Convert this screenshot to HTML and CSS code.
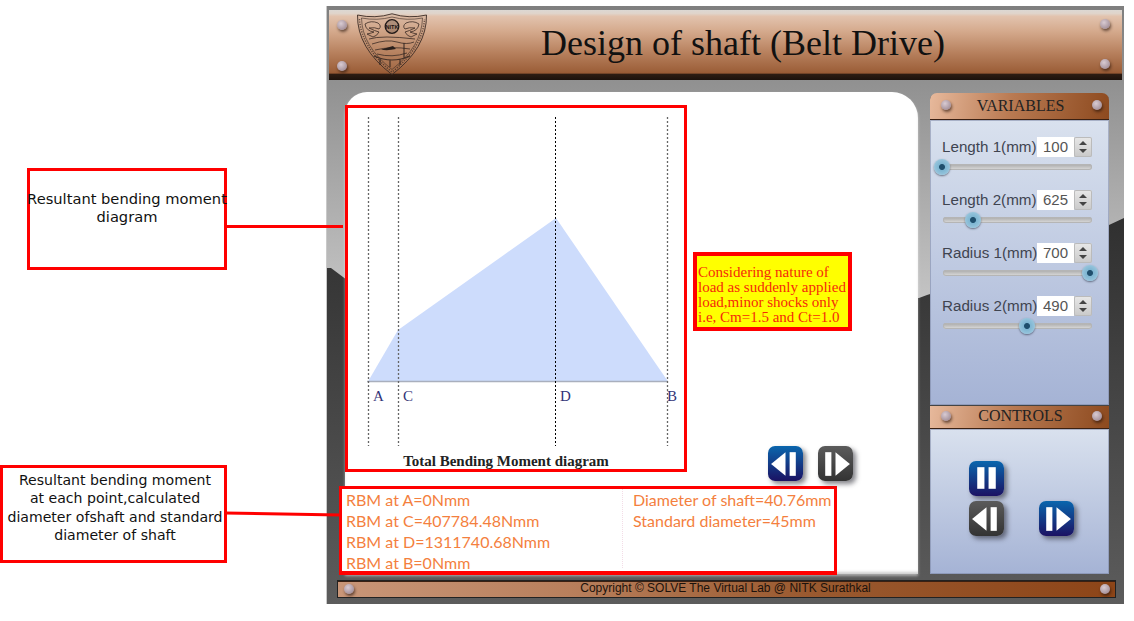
FILE: index.html
```html
<!DOCTYPE html>
<html lang="en">
<head>
<meta charset="utf-8">
<title>Design of shaft (Belt Drive)</title>
<link rel="stylesheet" href="styles.css">
</head>
<body>
<div class="page">
  <aside class="notes">
    <div class="note note-one">Resultant bending moment<br>diagram</div>
    <div class="note note-two">Resultant bending moment<br>at each point,calculated<br>diameter ofshaft and standard<br>diameter of shaft</div>
  </aside>

  <main class="app">
    <svg class="glass" viewBox="0 0 797 598" preserveAspectRatio="none" aria-hidden="true">
      <defs>
        <linearGradient id="light" x1="0" y1="0" x2="0" y2="1"><stop offset="0" stop-color="#7f7f7f"/><stop offset="1" stop-color="#c4c4c4"/></linearGradient>
        <linearGradient id="dark" x1="0" y1="0" x2="0" y2="1"><stop offset="0" stop-color="#181818"/><stop offset="1" stop-color="#5c5c5c"/></linearGradient>
      </defs>
      <rect width="797" height="598" fill="url(#dark)"/>
      <path d="M0 0H797V212L782 219Q690 262 600 289L592 292Q300 300 20 274L4 262L0 262Z" fill="url(#light)"/>
    </svg>

    <header class="masthead">
      <span class="rivet rivet-tl"></span><span class="rivet rivet-bl"></span>
      <span class="rivet rivet-tr"></span><span class="rivet rivet-br"></span>
      <svg class="crest" viewBox="0 0 70 62" aria-hidden="true">
        <path d="M.5 2Q18 6 35 .8Q52 6 69.500 2Q70 35 35 61.500Q0 35 .5 2Z" fill="#b98a6c" fill-opacity=".2" stroke="#3b2b25" stroke-width=".9"/>
        <path d="M4.500 5Q20 8 35 4Q50 8 65.500 5Q65 33 35 56.500Q5 33 4.500 5Z" fill="none" stroke="#3b2b25" stroke-width=".6"/>
        <path d="M2.500 6Q4 34 35 59Q66 34 67.500 6" fill="none" stroke="#3b2b25" stroke-width="1.500" stroke-dasharray="1.200 1.300" stroke-opacity=".7"/>
        <circle cx="35" cy="13.500" r="6.800" fill="#3a2c28" fill-opacity=".25" stroke="#221a18" stroke-width="1.300"/>
        <text class="crest-text" x="35" y="15.500" text-anchor="middle">NITK</text>
        <path d="M8 11Q14 7 21 10Q25 13 22 16Q18 14 12 15Q18 18 22 19Q20 23 16 24L10 21Q15 20 17 19Q9 18 8 11ZM62 11Q56 7 49 10Q45 13 48 16Q52 14 58 15Q52 18 48 19Q50 23 54 24L60 21Q55 20 53 19Q61 18 62 11Z" fill="none" stroke="#3b2b25" stroke-width=".8"/>
        <path d="M12 26Q25 22 58 26M15 31Q30 26 40 29Q50 32 57 29M18 37Q35 33 53 36M20 41Q35 45 50 40" fill="none" stroke="#3b2b25" stroke-width=".8"/>
        <path d="M47 30V45M17 43Q35 51 53 43M23 46V52M33 47V54M43 46V52" fill="none" stroke="#2a1f1b" stroke-width="1.200" stroke-opacity=".8"/>
        <path d="M24 36.500L36 33L39 36Q30 38 24 36.500Z" fill="#2a1f1b"/>
      </svg>
      <h1 class="title">Design of shaft (Belt Drive)</h1>
    </header>

    <div class="workspace">
      <section class="canvas">
        <div class="canvas-top">
          <figure class="diagram">
            <svg class="diagram-svg" viewBox="0 0 336 361" aria-label="Total Bending Moment diagram">
              <polygon points="20,273.500 50,222 208,110 320,273.500" fill="#cddcfc"/>
              <line x1="19" y1="273.500" x2="320" y2="273.500" stroke="#a9afbd" stroke-width="1.500"/>
              <g fill="none" stroke-dasharray="2 2">
                <line x1="20.500" y1="9" x2="20.500" y2="338" stroke="#666" stroke-width="1.300"/>
                <line x1="50.500" y1="9" x2="50.500" y2="338" stroke="#666" stroke-width="1.300"/>
                <line x1="207.500" y1="9" x2="207.500" y2="338" stroke="#000"/>
                <line x1="319.500" y1="9" x2="319.500" y2="338" stroke="#666" stroke-width="1.300"/>
              </g>
              <g class="axis-label">
                <text x="25" y="293">A</text>
                <text x="55" y="293">C</text>
                <text x="212" y="293">D</text>
                <text x="319" y="293">B</text>
              </g>
              <text class="diagram-title" x="158" y="358" text-anchor="middle">Total Bending Moment diagram</text>
            </svg>
          </figure>
          <div class="side">
            <p class="callout">Considering nature of load as suddenly applied load,minor shocks only i.e, Cm=1.5 and Ct=1.0</p>
            <div class="steps">
              <button class="btn btn-blue" aria-label="Previous"><svg viewBox="0 0 34 34"><path d="M3 17.500L17 6V29Z"/><rect x="21" y="6" width="6" height="23"/></svg></button>
              <button class="btn btn-dark" aria-label="Next"><svg viewBox="0 0 34 34"><rect x="7" y="6" width="6" height="23"/><path d="M17 6L31 17.500L17 29Z"/></svg></button>
            </div>
          </div>
        </div>
        <div class="results">
          <ul class="result-col">
            <li>RBM at A=0Nmm</li>
            <li>RBM at C=407784.48Nmm</li>
            <li>RBM at D=1311740.68Nmm</li>
            <li>RBM at B=0Nmm</li>
          </ul>
          <ul class="result-col result-col-right">
            <li>Diameter of shaft=40.76mm</li>
            <li>Standard diameter=45mm</li>
          </ul>
        </div>
      </section>

      <div class="sidebar">
        <section class="tray tray-variables">
          <h2 class="tray-head"><span class="rivet rivet-l"></span>VARIABLES<span class="rivet rivet-r"></span></h2>
          <div class="tray-body vars">
            <div class="var">
              <div class="var-row"><span class="var-label">Length 1(mm)</span><span class="spin-value">100</span><span class="spin"><i class="up"></i><i class="down"></i></span></div>
              <div class="track"><span class="thumb" style="left:-1px"></span></div>
            </div>
            <div class="var">
              <div class="var-row"><span class="var-label">Length 2(mm)</span><span class="spin-value">625</span><span class="spin"><i class="up"></i><i class="down"></i></span></div>
              <div class="track"><span class="thumb" style="left:30px"></span></div>
            </div>
            <div class="var">
              <div class="var-row"><span class="var-label">Radius 1(mm)</span><span class="spin-value">700</span><span class="spin"><i class="up"></i><i class="down"></i></span></div>
              <div class="track"><span class="thumb" style="left:147px"></span></div>
            </div>
            <div class="var">
              <div class="var-row"><span class="var-label">Radius 2(mm)</span><span class="spin-value">490</span><span class="spin"><i class="up"></i><i class="down"></i></span></div>
              <div class="track"><span class="thumb" style="left:84px"></span></div>
            </div>
          </div>
        </section>
        <section class="tray tray-controls">
          <h2 class="tray-head"><span class="rivet rivet-l"></span>CONTROLS<span class="rivet rivet-r"></span></h2>
          <div class="tray-body controls">
            <button class="btn btn-blue" aria-label="Pause"><svg viewBox="0 0 34 34"><rect x="8" y="6" width="7" height="21"/><rect x="19" y="6" width="7" height="21"/></svg></button>
            <span></span>
            <button class="btn btn-dark" aria-label="Previous"><svg viewBox="0 0 34 34"><path d="M3 17.500L17 6V29Z"/><rect x="21" y="6" width="6" height="23"/></svg></button>
            <button class="btn btn-blue" aria-label="Next"><svg viewBox="0 0 34 34"><rect x="7" y="6" width="6" height="23"/><path d="M17 6L31 17.500L17 29Z"/></svg></button>
          </div>
        </section>
      </div>
    </div>

    <footer class="foot">
      <span class="rivet rivet-fl"></span>
      <span class="foot-text">Copyright © SOLVE The Virtual Lab @ NITK Surathkal</span>
      <span class="rivet rivet-fr"></span>
    </footer>
  </main>

  <svg class="links" viewBox="0 0 1134 621" aria-hidden="true">
    <line x1="226" y1="226.500" x2="343" y2="226.500"/>
    <line x1="225" y1="513" x2="340" y2="515"/>
  </svg>
</div>
</body>
</html>
```

FILE: styles.css
```css
* { box-sizing: border-box; }

html, body {
  margin: 0;
  height: 621px;
  overflow: hidden;
  background: #fff;
}

.page {
  position: relative;
  display: flex;
  width: 1134px;
  height: 621px;
}

/* Left annotations */
.notes {
  width: 327px;
  flex: none;
  display: flex;
  flex-direction: column;
  align-items: flex-start;
  padding-top: 168px;
}

.note {
  background: #fff;
  box-shadow: inset 0 0 0 3px #f00;
  color: #111;
  font: 14.670px/18.400px "DejaVu Sans", sans-serif;
  text-align: center;
  white-space: nowrap;
}

.note-one {
  width: 200px;
  height: 102px;
  margin-left: 27px;
  padding-top: 22px;
}

.note-two {
  width: 227px;
  height: 98px;
  margin-top: 195px;
  padding: 6px 0 0 3px;
  font-size: 14.100px;
}

.links {
  position: absolute;
  inset: 0;
  width: 1134px;
  height: 621px;
  pointer-events: none;
}

.links line {
  stroke: #f00;
  stroke-width: 3;
}

/* Application frame */
.app {
  position: relative;
  flex: none;
  width: 797px;
  height: 598px;
  margin-top: 6px;
  padding: 4px 2px 0;
  display: flex;
  flex-direction: column;
  background: #555;
  box-shadow: inset 0 0 0 1px #6d6d6d, -1px 0 0 #c9c9c9;
  overflow: hidden;
}

.glass {
  position: absolute;
  inset: 0;
  width: 100%;
  height: 100%;
}

.masthead {
  position: relative;
  flex: none;
  height: 70px;
  display: flex;
  align-items: flex-start;
  padding: 3px 0 0 28px;
  background: linear-gradient(180deg, #dcd8d3 0, #e0d4ca 5%, #e2c3ae 9%, #d5aa8d 30%, #b67f5c 62%, #9c5f39 88%, #995a34 90%, #2d1c12 92%, #1d120c 100%);
}

.crest {
  width: 70px;
  height: 62px;
  flex: none;
}

.crest-text {
  font: bold 5.500px "Liberation Sans", sans-serif;
  fill: #1d1513;
}

.title {
  margin: 9px 0 0 114px;
  font: 400 36px/42px "Liberation Serif", serif;
  color: #111;
  white-space: nowrap;
}

.rivet {
  position: absolute;
  width: 10px;
  height: 10px;
  border-radius: 50%;
  background: radial-gradient(circle at 40% 35%, #d9cbd2, #a08c96 80%);
  box-shadow: 1px 2px 3px rgba(40, 20, 10, .65);
}

.rivet-tl { left: 8px; top: 10px; }
.rivet-bl { left: 8px; top: 51px; }
.rivet-tr { right: 12px; top: 9px; }
.rivet-br { right: 12px; top: 49px; }
.rivet-l { left: 11px; top: 7px; }
.rivet-r { right: 7px; top: 7px; }
.rivet-fl { left: 6px; top: 3px; }
.rivet-fr { right: 5px; top: 3px; }

.workspace {
  position: relative;
  flex: none;
  height: 494px;
  display: flex;
  padding: 12px 0 0 16px;
  gap: 12px;
}

/* Main white panel */
.canvas {
  flex: none;
  width: 573px;
  height: 482px;
  padding-top: 13px;
  background: #fff;
  border-radius: 22px 26px 0 0;
  box-shadow: 0 2px 3px rgba(255, 255, 255, .5), inset 0 -3px 3px -1px #ccc;
}

.canvas-top {
  display: flex;
  gap: 6px;
  height: 367px;
}

.diagram {
  flex: none;
  width: 342px;
  height: 367px;
  margin: 0;
  border: 3px solid #f00;
  background: #fff;
}

.diagram-svg {
  display: block;
  width: 336px;
  height: 361px;
  overflow: visible;
}

.axis-label text {
  font: 15px "Liberation Serif", serif;
  fill: #333377;
}

.diagram-title {
  font: bold 15px "Liberation Serif", serif;
  fill: #222;
}

.side {
  flex: none;
  width: 165px;
}

.callout {
  width: 159px;
  height: 79px;
  margin: 147px 0 0;
  padding: 9px 0 0 1px;
  border: 4px solid #f00;
  background: #ff0;
  color: #f52a0a;
  font: 15px/15px "Liberation Serif", serif;
}

.steps {
  display: flex;
  gap: 15px;
  margin: 115px 0 0 75px;
}

.btn {
  width: 35px;
  height: 35px;
  padding: 0;
  border: 0;
  border-radius: 7px;
  box-shadow: 3px 3px 5px rgba(30, 30, 40, .55);
}

.btn svg {
  display: block;
  width: 100%;
  height: 100%;
  fill: #fff;
}

.btn-blue { background: linear-gradient(180deg, #0a66ad, #1b1263); }
.btn-dark { background: linear-gradient(180deg, #5b5b5b, #333); }

.results {
  display: flex;
  width: 498px;
  height: 89px;
  margin: 14px 0 0 -6px;
  padding: 0 0 0 4px;
  border: 3px solid #f00;
  border-bottom-width: 4px;
  background: #fff;
  color: #f47f3e;
  font: 16px/21px "Lato", sans-serif;
}

.result-col {
  width: 276px;
  margin: 0;
  padding: 0;
  list-style: none;
  flex: none;
  white-space: nowrap;
}

.result-col-right {
  width: auto;
  padding-left: 10px;
  border-left: 1px dotted #f3dce6;
  height: 79px;
}

/* Side trays */
.sidebar {
  flex: none;
  width: 179px;
  height: 481px;
  margin-top: 1px;
  display: flex;
  flex-direction: column;
}

.tray-variables { height: 312px; flex: none; display: flex; flex-direction: column; }
.tray-controls { flex: 1; display: flex; flex-direction: column; }

.tray-head {
  position: relative;
  flex: none;
  margin: 0;
  padding: 2px 0 0 2px;
  background: linear-gradient(100deg, #e7b99c, #b97a52 45%, #8d4a1f);
  box-shadow: inset 0 -1px 0 #3a2012;
  color: #222;
  font: 400 16px/18px "Liberation Serif", serif;
  text-align: center;
}

.tray-variables .tray-head { height: 27px; border-radius: 7px 7px 0 0; padding-top: 4px; }
.tray-controls .tray-head { height: 24px; box-shadow: inset 0 1px 0 #444, inset 0 -1px 0 #3a2012; }
.tray-controls .rivet { top: 6px; }

.tray-body {
  flex: 1;
  background: linear-gradient(180deg, #d9e1ee, #a5b3d5);
  box-shadow: inset 0 0 0 1px rgba(120, 130, 160, .5);
}

.vars {
  padding: 17px 0 0 12px;
}

.var {
  height: 53px;
}

.var-row {
  display: flex;
  align-items: center;
  height: 20px;
}

.var-label {
  width: 95px;
  flex: none;
  margin-bottom: 2px;
  color: #3f4450;
  font: 15.200px "Liberation Sans", sans-serif;
  white-space: nowrap;
}

.spin-value {
  width: 37px;
  height: 20px;
  flex: none;
  background: #fff;
  color: #555;
  font: 15px/20px "Liberation Sans", sans-serif;
  text-align: center;
}

.spin {
  width: 18px;
  height: 20px;
  flex: none;
  display: flex;
  flex-direction: column;
  align-items: center;
  justify-content: space-evenly;
  border-radius: 2px;
  background: linear-gradient(180deg, #e8e8e8, #c9c9c9);
  box-shadow: inset 0 0 0 1px #bbb;
}

.spin i {
  width: 0;
  height: 0;
  border-left: 4px solid transparent;
  border-right: 4px solid transparent;
}

.spin .up { border-bottom: 4px solid #444; }
.spin .down { border-top: 4px solid #444; }

.track {
  position: relative;
  width: 149px;
  height: 6px;
  margin: 7px 0 0 1px;
  border-radius: 3px;
  background: linear-gradient(180deg, #a8a8a8, #ddd);
  box-shadow: inset 0 0 0 1px #b5b5b5;
}

.thumb {
  position: absolute;
  top: -5px;
  margin-left: -8px;
  width: 16px;
  height: 16px;
  border-radius: 50%;
  background: radial-gradient(circle, #1f4f6d 0 2.500px, #7fb6d2 3.500px, #a9d0e4 100%);
  box-shadow: 0 1px 2px rgba(30, 40, 60, .6);
}

.controls {
  display: grid;
  grid-template-columns: 35px 35px;
  grid-template-rows: 35px 35px;
  column-gap: 35px;
  row-gap: 5px;
  padding: 32px 0 0 39px;
}

/* Footer */
.foot {
  position: relative;
  flex: none;
  width: 777px;
  height: 16px;
  margin: 7px 0 0 9px;
  display: flex;
  justify-content: center;
  background: linear-gradient(90deg, #c99678, #b87f5c 30%, #9a5a30 60%, #8d4518);
  box-shadow: 0 0 0 1px #222, inset 0 1px 0 #3a2012;
  color: #1c120c;
  font: 12px/15px "Liberation Sans", sans-serif;
}

.foot-text {
  margin-left: -2px;
}
```
